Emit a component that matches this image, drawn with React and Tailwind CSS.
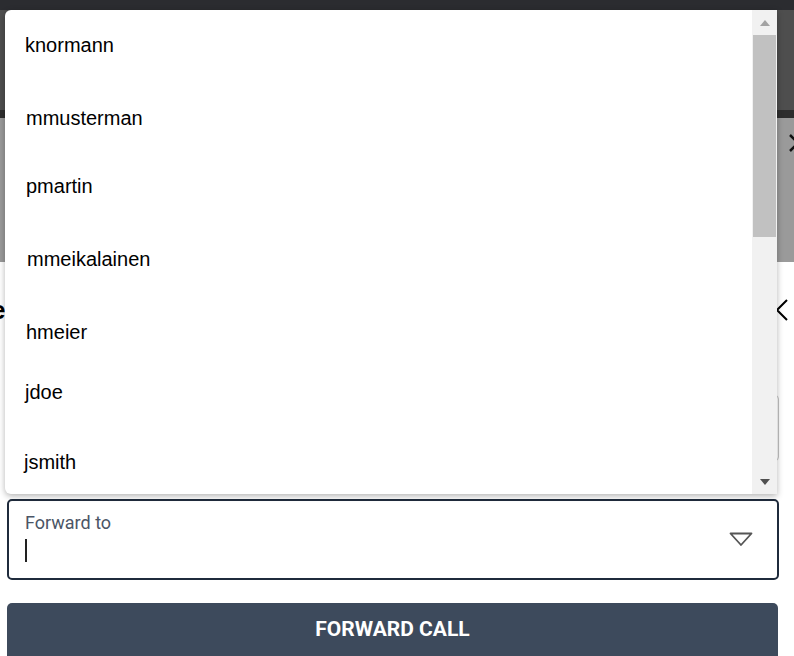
import React from 'react';

const users = [
  { name: 'knormann', mt: 'mt-[23px]', pl: 'pl-[20px]' },
  { name: 'mmusterman', mt: 'mt-[49px]', pl: 'pl-[21px]' },
  { name: 'pmartin', mt: 'mt-[44px]', pl: 'pl-[21px]' },
  { name: 'mmeikalainen', mt: 'mt-[49px]', pl: 'pl-[22px]' },
  { name: 'hmeier', mt: 'mt-[49px]', pl: 'pl-[21px]' },
  { name: 'jdoe', mt: 'mt-[36px]', pl: 'pl-[20px]' },
  { name: 'jsmith', mt: 'mt-[46px]', pl: 'pl-[19px]' },
];

function UserList() {
  return (
    <div className="absolute left-[5px] top-[10px] w-[772px] h-[484px] bg-white rounded-l-[6px] shadow-[0_2px_6px_rgba(0,0,0,0.3)] flex overflow-hidden">
      <div className="flex-1 flex flex-col">
        {users.map((u) => (
          <div
            key={u.name}
            className={`${u.mt} ${u.pl} h-[24px] leading-[24px] text-[20px] text-black`}
            style={{ fontFamily: '"Liberation Sans", Arial, sans-serif' }}
          >
            {u.name}
          </div>
        ))}
      </div>
      {/* scrollbar */}
      <div className="w-[25px] bg-[#f1f1f1] flex flex-col">
        <div className="h-[25px] flex items-center justify-center">
          <svg width="10" height="6" viewBox="0 0 10 6">
            <path d="M0 6 L5 0 L10 6 Z" fill="#a3a3a3" />
          </svg>
        </div>
        <div className="h-[202px] mx-[1px] bg-[#c1c1c1]" />
        <div className="flex-1" />
        <div className="h-[24px] flex items-center justify-center">
          <svg width="10" height="6" viewBox="0 0 10 6">
            <path d="M0 0 L10 0 L5 6 Z" fill="#505050" />
          </svg>
        </div>
      </div>
    </div>
  );
}

export default function App() {
  return (
    <div className="relative w-[794px] h-[656px] overflow-hidden bg-white">
      {/* page behind the dropdown */}
      <div className="h-[10px] bg-[#2b2c30]" />
      <div className="h-[100px] bg-[#4e4e4e]" />
      <div className="h-[8px] bg-[#2d2d2d]" />
      <div className="h-[144px] bg-[#9a9a9a] flex justify-end pt-[15px]">
        <svg width="20" height="20" viewBox="0 0 20 20" className="-mr-[14px]">
          <path d="M2 2 L18 18 M18 2 L2 18" stroke="#111" strokeWidth="2.5" />
        </svg>
      </div>

      <div className="mt-[36px] h-[24px] flex items-center justify-between">
        <span
          className="-ml-[9px] text-[26px] font-bold text-black leading-none"
          style={{ fontFamily: '"Liberation Sans", Arial, sans-serif' }}
        >
          e
        </span>
        <svg width="12" height="22" viewBox="0 0 12 22" className="mr-[6px]">
          <path d="M11 1 L1 11 L11 21" fill="none" stroke="#000" strokeWidth="2" />
        </svg>
      </div>

      <div className="mt-[73px] ml-[7px] w-[772px] h-[66px] border border-[#c4c4c4] rounded-[4px]" />

      {/* forward to field */}
      <div className="mt-[38px] ml-[7px] w-[772px] h-[81px] border-2 border-[#1f2b3c] rounded-[5px] flex items-start justify-between pl-[16px] pr-[24px]">
        <div className="flex flex-col pt-[11px]">
          <span
            className="text-[18px] leading-[22px] text-[#4b5566]"
            style={{ fontFamily: 'Roboto, sans-serif' }}
          >
            Forward to
          </span>
          <span className="mt-[5px] w-[1.5px] h-[23px] bg-[#222]" />
        </div>
        <svg width="24" height="15" viewBox="0 0 24 15" className="mt-[31px]">
          <path d="M1.5 1.5 L22.5 1.5 L12 13 Z" fill="none" stroke="#555" strokeWidth="1.8" strokeLinejoin="round" />
        </svg>
      </div>

      <button
        className="mt-[23px] ml-[7px] w-[771px] h-[60px] bg-[#3d4a5c] rounded-[5px] flex justify-center pt-[14px] text-white text-[21px] leading-[24px] font-bold uppercase"
        style={{ fontFamily: 'Roboto, sans-serif' }}
      >
        Forward Call
      </button>

      <UserList />
    </div>
  );
}
